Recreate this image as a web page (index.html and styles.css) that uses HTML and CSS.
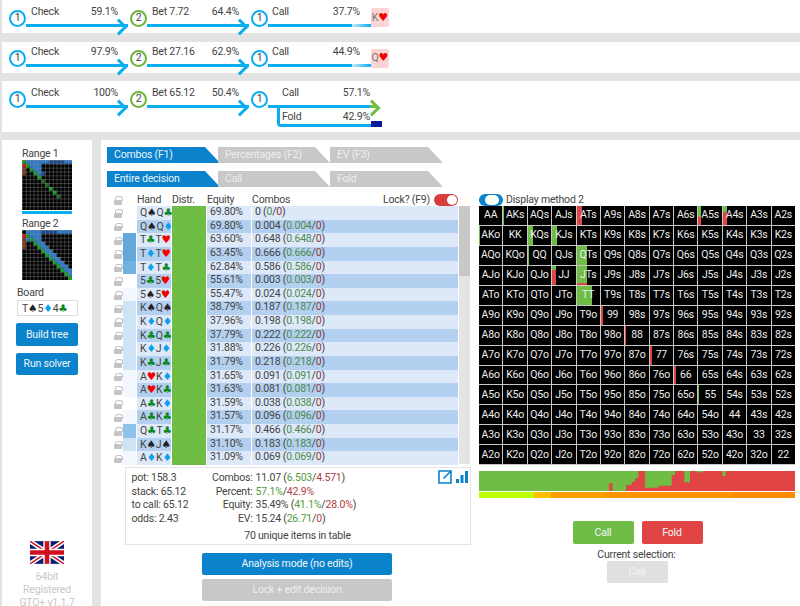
FILE: index.html
```html
<!DOCTYPE html>
<html lang="en">
<head>
<meta charset="utf-8">
<title>GTO+</title>
<link rel="stylesheet" href="styles.css">
</head>
<body>
<svg class="defs" width="0" height="0"><defs><pattern id="gridlines" width="1" height="1" patternUnits="userSpaceOnUse"><path d="M0 0H1M0 0V1" stroke="#8c8c8c" stroke-width=".2" fill="none"/></pattern></defs></svg>
<section class="tree t1">
  <span class="node">1</span>
  <div class="edge"><div class="lbl"><span>Check</span><span>59.1%</span></div><div class="line arrow"></div></div>
  <span class="node n2">2</span>
  <div class="edge"><div class="lbl"><span>Bet 7.72</span><span>64.4%</span></div><div class="line arrow"></div></div>
  <span class="node">1</span>
  <div class="edge last"><div class="lbl"><span>Call</span><span>37.7%</span></div><div class="line dashed"></div></div>
  <span class="card">K<b class="he">♥</b></span>
</section>
<section class="tree t2">
  <span class="node">1</span>
  <div class="edge"><div class="lbl"><span>Check</span><span>97.9%</span></div><div class="line arrow"></div></div>
  <span class="node n2">2</span>
  <div class="edge"><div class="lbl"><span>Bet 27.16</span><span>62.9%</span></div><div class="line arrow"></div></div>
  <span class="node">1</span>
  <div class="edge last"><div class="lbl"><span>Call</span><span>44.9%</span></div><div class="line dashed"></div></div>
  <span class="card">Q<b class="he">♥</b></span>
</section>
<section class="tree t3">
  <span class="node">1</span>
  <div class="edge"><div class="lbl"><span>Check</span><span>100%</span></div><div class="line arrow"></div></div>
  <span class="node n2">2</span>
  <div class="edge"><div class="lbl"><span>Bet 65.12</span><span>50.4%</span></div><div class="line arrow"></div></div>
  <span class="node">1</span>
  <div class="split">
    <div class="lbl upper"><span>Call</span><span>57.1%</span></div>
    <div class="line green"></div>
    <div class="fold"><span>Fold</span><span>42.9%</span></div>
  </div>
</section>

<div class="lower">
<aside class="side">
  <div class="cap">Range 1</div>
  <svg class="matrix" viewBox="0 0 13 13">
    <rect width="13" height="13" fill="#000"/>
    <path fill="#0fa01e" d="M0 0h1v1H0zM1 1h1v1H1zM2 2h1v1H2zM3 3h1v1H3zM4 4h1v1H4zM7 7h1v1H7zM8 8h1v1H8z"/>
    <path fill="#176a1f" d="M5 5h1v1H5zM6 6h1v1H6zM9 9h1v1H9z"/>
    <path fill="#2a78c8" d="M1 0h12v1H1zM2 1h3v1H2zM3 2h2v1H3zM4 3h1v1H4z"/>
    <path fill="#1c4a88" d="M5 3h1v1H5zM7 0h4v1H7z"/>
    <path fill="#d01818" d="M0 1h1v1H0z"/>
    <path fill="#7a3a20" d="M0 2h1v2H0z"/>
    <rect width="13" height="13" fill="url(#gridlines)"/>
  </svg>
  <div class="rangebar"></div>
  <div class="cap cap2">Range 2</div>
  <svg class="matrix" viewBox="0 0 13 13">
    <rect width="13" height="13" fill="#000"/>
    <path fill="#0fa01e" d="M1 1h1v1H1zM2 2h1v1H2zM3 3h1v1H3zM4 4h1v1H4zM5 5h1v1H5zM6 6h1v1H6zM7 7h1v1H7zM8 8h1v1H8zM9 9h1v1H9zM10 10h1v1h-1zM11 11h1v1h-1zM12 12h1v1h-1z"/>
    <path fill="#2a78c8" d="M1 0h4v1H1zM9 0h4v1H9zM2 1h3v1H2zM1 2h1v1H1zM3 2h2v1H3zM4 3h2v1H4zM5 4h2v1H5zM6 5h2v1H6zM7 6h2v1H7zM8 7h2v1H8zM9 8h2v1H9zM10 9h2v1h-2zM11 10h2v1h-2zM12 11h1v1h-1z"/>
    <path fill="#1c4a88" d="M5 0h4v1H5z"/>
    <path fill="#d01818" d="M0 1h1v1H0z"/>
    <path fill="#7a3a20" d="M0 2h1v3H0z"/>
    <rect width="13" height="13" fill="url(#gridlines)"/>
  </svg>
  <div class="cap board-cap">Board</div>
  <div class="board">T<b class="sp">♠</b>5<b class="di">♦</b>4<b class="cl">♣</b></div>
  <button class="btn side-btn">Build tree</button>
  <button class="btn side-btn run">Run solver</button>
  <svg class="flag" viewBox="0 0 60 40">
    <rect width="60" height="40" fill="#0a1a6e"/>
    <path d="M0 0L60 40M60 0L0 40" stroke="#fff" stroke-width="8"/>
    <path d="M0 0L60 40M60 0L0 40" stroke="#d0101c" stroke-width="2.6"/>
    <path d="M30 0V40M0 20H60" stroke="#fff" stroke-width="13"/>
    <path d="M30 0V40M0 20H60" stroke="#d0101c" stroke-width="8"/>
  </svg>
  <div class="ver">64bit<br>Registered<br>GTO+ v1.1.7</div>
</aside>

<main class="main">
  <div class="leftcol">
    <nav class="tabs">
      <span class="tab on">Combos (F1)</span>
      <span class="tab t2nd">Percentages (F2)</span>
      <span class="tab t3rd">EV (F3)</span>
    </nav>
    <nav class="tabs second">
      <span class="tab on">Entire decision</span>
      <span class="tab t2nd">Call</span>
      <span class="tab t3rd">Fold</span>
    </nav>
    <div class="thead">
      <i class="lock"></i><span></span><span class="hh">Hand</span><span class="hd">Distr.</span><span class="he-h">Equity</span>
      <div class="hc"><span>Combos</span><span class="lockq">Lock? (F9)<i class="switch red"></i></span></div>
    </div>
    <div class="tablewrap">
      <div class="tbody">
        <div class="row"><i class="lock"></i><i class="sw"></i><span class="h">Q<b class="sp">♠</b>Q<b class="cl">♣</b></span><i class="d"></i><span class="e">69.80%</span><span class="c">0 (<u>0</u>/<s>0</s>)</span></div>
        <div class="row alt"><i class="lock"></i><i class="sw"></i><span class="h">Q<b class="sp">♠</b>Q<b class="di">♦</b></span><i class="d"></i><span class="e">69.80%</span><span class="c">0.004 (<u>0.004</u>/<s>0</s>)</span></div>
        <div class="row"><i class="lock"></i><i class="sw s4"></i><span class="h">T<b class="cl">♣</b>T<b class="he">♥</b></span><i class="d"></i><span class="e">63.60%</span><span class="c">0.648 (<u>0.648</u>/<s>0</s>)</span></div>
        <div class="row alt"><i class="lock"></i><i class="sw s4"></i><span class="h">T<b class="di">♦</b>T<b class="he">♥</b></span><i class="d"></i><span class="e">63.45%</span><span class="c">0.666 (<u>0.666</u>/<s>0</s>)</span></div>
        <div class="row"><i class="lock"></i><i class="sw s3"></i><span class="h">T<b class="di">♦</b>T<b class="cl">♣</b></span><i class="d"></i><span class="e">62.84%</span><span class="c">0.586 (<u>0.586</u>/<s>0</s>)</span></div>
        <div class="row alt"><i class="lock"></i><i class="sw"></i><span class="h">5<b class="cl">♣</b>5<b class="he">♥</b></span><i class="d"></i><span class="e">55.61%</span><span class="c">0.003 (<u>0.003</u>/<s>0</s>)</span></div>
        <div class="row"><i class="lock"></i><i class="sw s0"></i><span class="h">5<b class="sp">♠</b>5<b class="he">♥</b></span><i class="d"></i><span class="e">55.47%</span><span class="c">0.024 (<u>0.024</u>/<s>0</s>)</span></div>
        <div class="row alt"><i class="lock"></i><i class="sw s1"></i><span class="h">K<b class="sp">♠</b>Q<b class="sp">♠</b></span><i class="d"></i><span class="e">38.79%</span><span class="c">0.187 (<u>0.187</u>/<s>0</s>)</span></div>
        <div class="row"><i class="lock"></i><i class="sw s1"></i><span class="h">K<b class="di">♦</b>Q<b class="di">♦</b></span><i class="d"></i><span class="e">37.96%</span><span class="c">0.198 (<u>0.198</u>/<s>0</s>)</span></div>
        <div class="row alt"><i class="lock"></i><i class="sw s1"></i><span class="h">K<b class="cl">♣</b>Q<b class="cl">♣</b></span><i class="d"></i><span class="e">37.79%</span><span class="c">0.222 (<u>0.222</u>/<s>0</s>)</span></div>
        <div class="row"><i class="lock"></i><i class="sw s1"></i><span class="h">K<b class="di">♦</b>J<b class="di">♦</b></span><i class="d"></i><span class="e">31.88%</span><span class="c">0.226 (<u>0.226</u>/<s>0</s>)</span></div>
        <div class="row alt"><i class="lock"></i><i class="sw s1"></i><span class="h">K<b class="cl">♣</b>J<b class="cl">♣</b></span><i class="d"></i><span class="e">31.79%</span><span class="c">0.218 (<u>0.218</u>/<s>0</s>)</span></div>
        <div class="row"><i class="lock"></i><i class="sw s0"></i><span class="h">A<b class="he">♥</b>K<b class="di">♦</b></span><i class="d"></i><span class="e">31.65%</span><span class="c">0.091 (<u>0.091</u>/<s>0</s>)</span></div>
        <div class="row alt"><i class="lock"></i><i class="sw s0"></i><span class="h">A<b class="he">♥</b>K<b class="cl">♣</b></span><i class="d"></i><span class="e">31.63%</span><span class="c">0.081 (<u>0.081</u>/<s>0</s>)</span></div>
        <div class="row"><i class="lock"></i><i class="sw"></i><span class="h">A<b class="cl">♣</b>K<b class="di">♦</b></span><i class="d"></i><span class="e">31.59%</span><span class="c">0.038 (<u>0.038</u>/<s>0</s>)</span></div>
        <div class="row alt"><i class="lock"></i><i class="sw s0"></i><span class="h">A<b class="cl">♣</b>K<b class="cl">♣</b></span><i class="d"></i><span class="e">31.57%</span><span class="c">0.096 (<u>0.096</u>/<s>0</s>)</span></div>
        <div class="row"><i class="lock"></i><i class="sw s2"></i><span class="h">Q<b class="cl">♣</b>T<b class="cl">♣</b></span><i class="d"></i><span class="e">31.17%</span><span class="c">0.466 (<u>0.466</u>/<s>0</s>)</span></div>
        <div class="row alt"><i class="lock"></i><i class="sw s1"></i><span class="h">K<b class="sp">♠</b>J<b class="sp">♠</b></span><i class="d"></i><span class="e">31.10%</span><span class="c">0.183 (<u>0.183</u>/<s>0</s>)</span></div>
        <div class="row"><i class="lock"></i><i class="sw s0"></i><span class="h">A<b class="di">♦</b>K<b class="di">♦</b></span><i class="d"></i><span class="e">31.09%</span><span class="c">0.069 (<u>0.069</u>/<s>0</s>)</span></div>
      </div>
      <div class="scroll"><div class="thumb"></div></div>
    </div>
    <section class="info">
      <div class="icons">
        <svg class="ico" viewBox="0 0 14 14"><path d="M8 1H1v12h12V6M5.500 8.500L12.500 1.500M8 1h5v5" fill="none" stroke="#0a82cc" stroke-width="1.600"/></svg>
        <svg class="ico" viewBox="0 0 14 14"><path d="M1 9h3v4H1zM5.500 5h3v8h-3zM10 1h3v12h-3z" fill="#0a82cc"/></svg>
      </div>
      <div class="info-main">
        <div class="pot"><div>pot: 158.3</div><div>stack: 65.12</div><div>to call: 65.12</div><div>odds: 2.43</div></div>
        <div class="stats">
          <span class="k">Combos:</span><span>11.07 (<em class="gr">6.503</em>/<em class="rd">4.571</em>)</span>
          <span class="k">Percent:</span><span><em class="gr">57.1%</em>/<em class="rd">42.9%</em></span>
          <span class="k">Equity:</span><span>35.49% (<em class="gr">41.1%</em>/<em class="rd">28.0%</em>)</span>
          <span class="k">EV:</span><span>15.24 (<em class="gr">26.71</em>/<em class="rd">0</em>)</span>
        </div>
      </div>
      <div class="uniq">70 unique items in table</div>
    </section>
    <button class="btn wide">Analysis mode (no edits)</button>
    <button class="btn wide off">Lock + edit decision</button>
  </div>

  <div class="rightcol">
    <div class="display"><i class="switch blue"></i><span>Display method 2</span></div>
    <div class="grid">
      <span>AA</span><span>AKs<i class="bar g" style="width:1px"></i></span><span>AQs</span><span>AJs</span><span>ATs<i class="bar r" style="width:5px"></i></span><span>A9s</span><span>A8s</span><span>A7s</span><span>A6s</span><span>A5s<i class="bar mix" style="width:3px;--g:60%"></i></span><span>A4s<i class="bar mix" style="width:4px;--g:30%"></i></span><span>A3s</span><span>A2s</span>
      <span>AKo<i class="bar g" style="width:1px"></i></span><span>KK</span><span>KQs<i class="bar g" style="width:5px"></i></span><span>KJs<i class="bar g" style="width:5px"></i></span><span>KTs</span><span>K9s</span><span>K8s</span><span>K7s</span><span>K6s</span><span>K5s</span><span>K4s</span><span>K3s</span><span>K2s</span>
      <span>AQo</span><span>KQo</span><span>QQ<i class="bar g" style="width:1px"></i></span><span>QJs</span><span>QTs<i class="bar g" style="width:10px"></i></span><span>Q9s</span><span>Q8s</span><span>Q7s</span><span>Q6s</span><span>Q5s</span><span>Q4s</span><span>Q3s</span><span>Q2s</span>
      <span>AJo</span><span>KJo</span><span>QJo</span><span>JJ<i class="bar mix" style="width:4px;--g:20%"></i></span><span>JTs<i class="bar mix" style="width:10px;--g:88%"></i></span><span>J9s</span><span>J8s</span><span>J7s</span><span>J6s</span><span>J5s</span><span>J4s</span><span>J3s</span><span>J2s</span>
      <span>ATo</span><span>KTo</span><span>QTo</span><span>JTo</span><span>TT<i class="bar g" style="width:15px"></i></span><span>T9s</span><span>T8s</span><span>T7s</span><span>T6s</span><span>T5s</span><span>T4s</span><span>T3s</span><span>T2s</span>
      <span>A9o</span><span>K9o</span><span>Q9o</span><span>J9o</span><span>T9o</span><span>99<i class="bar r" style="width:2px"></i></span><span>98s</span><span>97s</span><span>96s</span><span>95s</span><span>94s</span><span>93s</span><span>92s</span>
      <span>A8o</span><span>K8o</span><span>Q8o</span><span>J8o</span><span>T8o</span><span>98o</span><span>88<i class="bar r" style="width:1px"></i></span><span>87s</span><span>86s</span><span>85s</span><span>84s</span><span>83s</span><span>82s</span>
      <span>A7o</span><span>K7o</span><span>Q7o</span><span>J7o</span><span>T7o</span><span>97o</span><span>87o</span><span>77<i class="bar r" style="width:2px"></i></span><span>76s</span><span>75s</span><span>74s</span><span>73s</span><span>72s</span>
      <span>A6o</span><span>K6o</span><span>Q6o</span><span>J6o</span><span>T6o</span><span>96o</span><span>86o</span><span>76o</span><span>66<i class="bar r" style="width:2px"></i></span><span>65s</span><span>64s</span><span>63s</span><span>62s</span>
      <span>A5o</span><span>K5o</span><span>Q5o</span><span>J5o</span><span>T5o</span><span>95o</span><span>85o</span><span>75o</span><span>65o</span><span>55<i class="bar g" style="width:1px"></i></span><span>54s</span><span>53s</span><span>52s</span>
      <span>A4o</span><span>K4o</span><span>Q4o</span><span>J4o</span><span>T4o</span><span>94o</span><span>84o</span><span>74o</span><span>64o</span><span>54o</span><span>44</span><span>43s</span><span>42s</span>
      <span>A3o</span><span>K3o</span><span>Q3o</span><span>J3o</span><span>T3o</span><span>93o</span><span>83o</span><span>73o</span><span>63o</span><span>53o</span><span>43o</span><span>33</span><span>32s</span>
      <span>A2o</span><span>K2o</span><span>Q2o</span><span>J2o</span><span>T2o</span><span>92o</span><span>82o</span><span>72o</span><span>62o</span><span>52o</span><span>42o</span><span>32o</span><span>22</span>
    </div>
    <svg class="chart" viewBox="0 0 948 60" preserveAspectRatio="none">
      <rect width="948" height="60" fill="#6fbd44"/>
      <path fill="#e04444" d="M390 60V37H401V60H441V42H458V32H468V22H478V0H498V50H538V44H578V12H588V0H616V34H633V0H653V4H673V0H730V15H740V0H948V60Z"/>
    </svg>
    <div class="heat">
      <i class="h1" style="width:17.500%"></i><i class="h2" style="width:5.300%"></i><i class="h3" style="width:17.100%"></i><i class="h4" style="width:40.100%"></i><i class="h5" style="width:20%"></i>
    </div>
    <div class="acts"><button class="btn act act-call">Call</button><button class="btn act act-fold">Fold</button></div>
    <div class="cursel">Current selection:</div>
    <button class="btn act cur">Call</button>
  </div>
</main>
</div>
</body>
</html>
```

FILE: styles.css
```css
* { box-sizing: border-box; }
html, body { margin: 0; padding: 0; }
body {
  width: 800px; height: 606px; overflow: hidden;
  background: #e3e3e3; color: #444; letter-spacing: -.2px;
  font: 10.500px/12px Roboto, "Open Sans", sans-serif;
}
.defs { position: absolute; }
b { font-weight: normal; font-family: "DejaVu Sans", sans-serif; font-size: 10.500px; letter-spacing: 0; }
.sp { color: #222; } .he { color: #f00000; } .di { color: #0a9ff0; } .cl { color: #0a8a1e; }

/* action trees */
.tree { margin-left: 2px; background: #fff; display: flex; align-items: flex-start; padding-left: 7px; }
.t1 { height: 33px; padding-top: 9.500px; margin-bottom: 9px; }
.t2 { height: 31px; padding-top: 8px; margin-bottom: 8px; }
.t3 { height: 51px; padding-top: 9.500px; margin-bottom: 8px; }
.node {
  flex: none; width: 17px; height: 17px; border: 2px solid #0aaef0; border-radius: 50%;
  display: flex; align-items: center; justify-content: center; font-size: 10.500px; line-height: 1; background: #fff; z-index: 1;
}
.n2 { border-color: #6ab53a; }
.edge { width: 104px; margin-top: -4px; }
.edge.last { width: 103px; }
.lbl { display: flex; justify-content: space-between; height: 12px; padding: 0 12px 0 5px; }
.last .lbl { padding: 0 11px 0 4px; }
.line { height: 3px; margin-top: 6px; background: #0aaef0; position: relative; }
.arrow::after {
  content: ""; position: absolute; right: 3px; top: -3px; width: 9px; height: 9px;
  border-top: 3px solid #0aaef0; border-right: 3px solid #0aaef0; transform: rotate(45deg);
}
.arrow { margin-right: 2px; }
.dashed { background: linear-gradient(90deg, #0aaef0 82%, #bfe9fb 82%, #0aaef0 100%); }
.card {
  flex: none; width: 18px; height: 19px; margin-top: -1.500px; background: #fcd4d4; border-radius: 2px;
  display: flex; align-items: center; justify-content: center; color: #777;
}
.card b { font-size: 11px; }
.split { width: 115px; margin-top: -4px; }
.split .lbl.upper { padding: 0 13px 0 14px; }
.split .line.green { margin-right: 13px; }
.line.green::after {
  content: ""; position: absolute; right: -7px; top: 0; width: 7px; height: 3px; background: #6fbd44;
}
.line.green::before {
  content: ""; position: absolute; right: -8px; top: -3px; width: 9px; height: 9px; z-index: 1;
  border-top: 3px solid #6fbd44; border-right: 3px solid #6fbd44; transform: rotate(45deg);
}
.fold {
  position: relative; display: flex; justify-content: space-between; margin: -1px 12px 0 9px; height: 20px;
  border-left: 3px solid #0aaef0; border-bottom: 3px solid #0aaef0; border-bottom-left-radius: 4px;
  padding: 4px 1px 0 2px;
}
.fold::after { content: ""; position: absolute; right: -11px; bottom: -3px; width: 11px; height: 6px; background: #0a1a9a; }

/* lower area */
.lower { display: flex; height: 466px; padding-left: 2px; gap: 9px; }
.side { width: 90px; background: #fff; padding: 8px 0 0 15px; overflow: hidden; flex: none; }
.cap { height: 12px; margin-left: 5px; }
.cap2 { margin-top: 4px; }
.matrix { display: block; width: 50px; height: 50px; margin-left: 5px; }
.rangebar { width: 50px; height: 3px; margin: 1px 0 0 5px; background: #0aaef0; }
.board-cap { margin: 7px 0 1px 0; }
.board {
  width: 61px; height: 16px; border: 1px solid #ddd; padding-left: 4px; line-height: 14px; white-space: nowrap;
}
.btn {
  display: block; border: 0; border-radius: 2px; background: #0a82cc; color: #f0f6fb; padding: 0;
  font: 10.500px/12px Roboto, "Open Sans", sans-serif; letter-spacing: -.2px; text-align: center;
}
.side-btn { width: 62px; height: 23px; margin: 7px 0 0 -1px; }
.side-btn.run { height: 22px; }
.flag { display: block; width: 34px; height: 23px; margin: 166px 0 0 13px; }
.ver { width: 62px; margin: 6px 0 0 -1px; text-align: center; color: #c8c8c8; line-height: 13px; white-space: nowrap; }

.main { flex: 1; background: #fff; display: flex; padding: 7px 0 0 6px; }
.leftcol { width: 372px; flex: none; }
.tabs { display: flex; height: 16px; }
.tabs.second { margin-top: 8px; }
.tab {
  height: 16px; width: 113px; padding-left: 7px; line-height: 16px; background: #c8c8c8; color: #eee;
  clip-path: polygon(0 0, calc(100% - 15px) 0, 100% 100%, 0 100%);
}
.tab.on { background: #0a82cc; color: #eaf3fa; }
.t2nd { margin-left: -2px; width: 112px; }
.t3rd { width: 113px; }

.thead, .row {
  display: grid; grid-template-columns: 8px 13px 34px 34px 44px 1fr; column-gap: 1px; align-items: center; width: 344px;
}
.thead { margin: 6px 0 0 7px; height: 13px; }
.hh, .hd, .he-h { white-space: nowrap; }
.hc { display: flex; justify-content: space-between; align-items: center; white-space: nowrap; }
.lockq { display: flex; align-items: center; gap: 4px; }
.switch { display: block; width: 24px; height: 12px; border-radius: 6px; position: relative; }
.switch.red { background: #d83c3c; }
.switch.blue { background: #0a82cc; }
.switch::after { content: ""; position: absolute; top: 1px; width: 10px; height: 10px; background: #fff; border-radius: 50%; }
.switch.red::after { right: 1px; }
.switch.blue::after { left: 6px; width: 14px; border-radius: 5px; }

.tablewrap { display: flex; gap: 1px; margin-left: 7px; width: 356px; }
.tbody { width: 344px; display: flex; flex-direction: column; gap: 1px; }
.row { height: 12.640px; line-height: 12.640px; white-space: nowrap; }
.lock { display: block; position: relative; width: 8px; height: 5px; margin-top: 5px; background: #c4c4c4; border-radius: 1px; }
.lock::before {
  content: ""; position: absolute; left: 1px; top: -3.500px; width: 6px; height: 4px;
  border: 1.500px solid #c4c4c4; border-bottom: 0; border-radius: 3px 3px 0 0;
}
.sw { display: block; height: 100%; }
.s0 { background: #f1f7fc; } .s1 { background: #cfe5f5; } .s2 { background: #8fc3e9; } .s3 { background: #72b2e2; } .s4 { background: #64a8db; }
.h, .e, .c { background: #dde8f8; height: 100%; }
.alt .h, .alt .e, .alt .c { background: #b4d0f0; }
.h { padding-left: 3px; }
.d { display: block; background: #6fbd44; height: calc(100% + 1px); }
.e { padding-left: 3px; }
.c { padding-left: 3px; }
u { text-decoration: none; color: #4d8a4a; }
s { text-decoration: none; color: #8a3a3a; }
.scroll { width: 11px; height: 258px; background: #e4e4e4; }
.thumb { height: 70px; background: #c8c8c8; }

.info {
  position: relative; width: 346px; height: 78px; margin: 3px 0 0 17.500px; border: 1px solid #e3e3e3; padding: 3px 0 0 6px;
}
.icons { position: absolute; right: 1px; top: 2px; display: flex; gap: 3px; }
.ico { display: block; width: 14px; height: 14px; }
.info-main { display: flex; line-height: 13.500px; white-space: nowrap; }
.pot { width: 75px; }
.stats { display: grid; grid-template-columns: 46px auto; column-gap: 3px; justify-content: start; }
.k { text-align: right; }
em { font-style: normal; }
.gr { color: #559a3c; } .rd { color: #b04040; }
.uniq { position: absolute; left: 0; right: 0; top: 62px; text-align: center; }
.wide { width: 190px; height: 22px; margin: 8px 0 0 95px; }
.wide.off { margin-top: 4px; background: #c8c8c8; color: #eee; }

.rightcol { width: 316px; padding-top: 46px; }
.display { display: flex; align-items: center; gap: 3px; height: 13px; white-space: nowrap; }
.grid {
  display: grid; grid-template-columns: repeat(13, 1fr); grid-auto-rows: 18.950px; gap: 1px;
  width: 316px; height: 259px; background: #c8c8c8; padding: 0 0 1px;
  white-space: nowrap;
}
.grid span {
  position: relative; isolation: isolate; display: flex; align-items: center; justify-content: center;
  background: #000; color: #eee; overflow: hidden;
}
.bar { position: absolute; left: 0; top: 0; bottom: 0; z-index: -1; }
.bar.g { background: #6fbd44; } .bar.r { background: #e04444; }
.bar.mix { background: linear-gradient(#6fbd44 var(--g), #e04444 0); }
.chart { display: block; width: 316px; height: 20px; margin-top: 6px; }
.heat { display: flex; height: 6px; margin-top: 1px; }
.heat i { display: block; height: 6px; }
.h1 { background: #bcff00; } .h2 { background: #ffc000; } .h3 { background: #ff9e00; } .h4 { background: #ff9400; } .h5 { background: #ff8c00; }
.acts { display: flex; justify-content: center; gap: 8px; margin: 23px 0 0 1px; }
.act { width: 61px; height: 23px; }
.act-call { background: #6fbd44; } .act-fold { background: #e04444; }
.cursel { text-align: center; margin-top: 5px; height: 12px; margin-left: -1px; }
.cur { height: 22px; margin: 0 auto; background: #e0e0e0; color: #f4f4f4; }
```
